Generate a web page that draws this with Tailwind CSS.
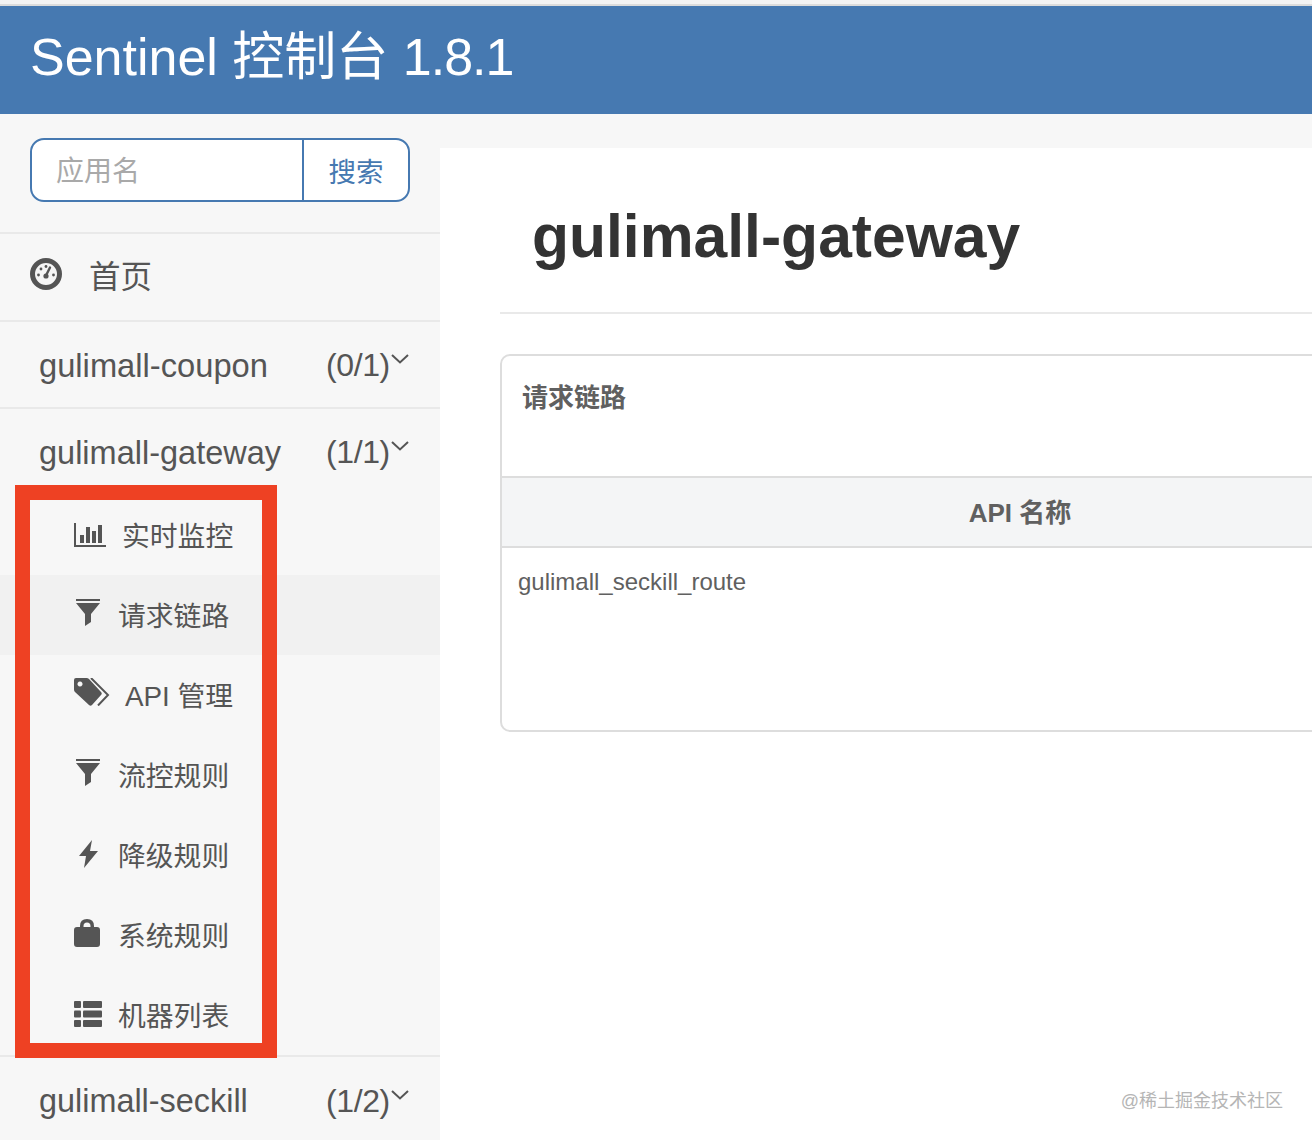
<!DOCTYPE html>
<html lang="zh-CN">

<head>
    <meta charset="UTF-8">
    <title>Sentinel 控制台</title>
    <script src="https://cdn.jsdelivr.net/npm/@tailwindcss/browser@4"></script>
</head>

<body class="relative h-[1140px] w-[1312px] overflow-hidden bg-white text-[#555] font-['Liberation_Sans','Noto_Sans_CJK_SC',sans-serif]">
    <!-- Navbar -->
    <div class="h-[6px] border-b-2 border-[#dcdcdc] bg-[#f3f3f3]"></div>
    <header class="flex h-[108px] items-center bg-[#4679b1] pl-[30px] pb-[6px] text-[52px] leading-none text-white">
        <span class="whitespace-pre">Sentinel 控制台 <span class="tracking-[-1px]">1.8.1</span></span>
    </header>

    <div class="flex h-[1026px]">
        <!-- Sidebar -->
        <aside class="w-[440px] shrink-0 bg-[#f7f7f7]">
            <div class="h-[120px] border-b-2 border-[#e9e9e9] px-[30px] pt-[24px]">
                <div class="flex h-[64px] w-[380px] overflow-hidden rounded-[14px] border-2 border-[#4679b1] bg-white">
                    <div class="flex w-[270px] items-center pl-[24px] pt-[3px] text-[28px] text-[#a9a9a9]">应用名</div>
                    <div class="flex flex-1 items-center justify-center border-l-2 border-[#4679b1] pt-[6px] text-[27.500px] text-[#4679b1]">搜索</div>
                </div>
            </div>

            <a class="flex h-[88px] items-center border-b-2 border-[#e9e9e9] pl-[30px]">
                <svg class="mb-[7px] h-[32px] w-[32px]" viewBox="0 0 32 32">
                    <circle cx="16" cy="16" r="13.5" fill="#f6f6f6" stroke="#555" stroke-width="5" />
                    <path d="M16 17.5 L20 9.5" stroke="#555" stroke-width="2.4" stroke-linecap="round" />
                    <circle cx="16" cy="18" r="2.6" fill="#555" />
                    <circle cx="8.5" cy="17" r="1.4" fill="#555" />
                    <circle cx="23.5" cy="17" r="1.4" fill="#555" />
                    <circle cx="11" cy="11" r="1.4" fill="#555" />
                    <circle cx="16" cy="8.5" r="1.4" fill="#555" />
                </svg>
                <span class="ml-[27px] pt-[2px] text-[31.500px]">首页</span>
            </a>

            <a class="flex h-[87px] items-center justify-between border-b-2 border-[#e9e9e9] pl-[39px] pr-[30px] text-[32.700px]">
                <span class="mt-[2px]">gulimall-coupon</span>
                <span class="flex w-[84px] items-start text-[32px] tracking-[-0.4px]">(0/1)
                    <svg class="ml-[1px] mt-[13px] h-[10px] w-[18px]" viewBox="0 0 18 10" fill="none" stroke="#555" stroke-width="2"><path d="M1 1 L9 8.500 L17 1" /></svg>
                </span>
            </a>

            <a class="flex h-[86px] items-center justify-between pl-[39px] pr-[30px] text-[32.500px]">
                <span class="mt-[2px]">gulimall-gateway</span>
                <span class="flex w-[84px] items-start text-[32px] tracking-[-0.4px]">(1/1)
                    <svg class="ml-[1px] mt-[13px] h-[10px] w-[18px]" viewBox="0 0 18 10" fill="none" stroke="#555" stroke-width="2"><path d="M1 1 L9 8.500 L17 1" /></svg>
                </span>
            </a>

            <!-- Submenu -->
            <ul class="text-[27.800px]">
                <li class="flex h-[80px] items-center pl-[74px]">
                    <svg class="h-[24px] w-[32px]" viewBox="0 0 32 24" fill="#555">
                        <path d="M0 0h2v22h30v2H0z" />
                        <path d="M6 12h4v8H6zM12 4h4v16h-4zM18 8h4v12h-4zM24 2h4v18h-4z" />
                    </svg>
                    <span class="ml-[16px] pt-[3px]">实时监控</span>
                </li>
                <li class="flex h-[80px] items-center bg-[#f1f1f1] pl-[76px]">
                    <svg class="mb-[4px] h-[28px] w-[24px]" viewBox="0 0 24 28" fill="#555">
                        <path d="M0 0h24v2H0zM0 4h24L15 15v8L9 27V15z" />
                    </svg>
                    <span class="ml-[18px] pt-[3px]">请求链路</span>
                </li>
                <li class="flex h-[80px] items-center pl-[74px]">
                    <svg class="mb-[6px] h-[28px] w-[36px]" viewBox="0 0 36 28" fill="#555">
                        <path fill-rule="evenodd" d="M2 0h10.500q1.500 0 2.500 1l12 13q1.500 1.500 0 3L18 27q-1.500 1.500-3 0L1 14q-1-1-1-2.500V2q0-2 2-2zM6 3.500a2.500 2.500 0 1 0 .01 0z" />
                        <path d="M17 0 L34 17 L24 27.500" fill="none" stroke="#555" stroke-width="2" />
                    </svg>
                    <span class="ml-[15px] pt-[3px]">API 管理</span>
                </li>
                <li class="flex h-[80px] items-center pl-[76px]">
                    <svg class="mb-[4px] h-[28px] w-[24px]" viewBox="0 0 24 28" fill="#555">
                        <path d="M0 0h24v2H0zM0 4h24L15 15v8L9 27V15z" />
                    </svg>
                    <span class="ml-[18px] pt-[3px]">流控规则</span>
                </li>
                <li class="flex h-[80px] items-center pl-[79px]">
                    <svg class="mb-[3px] h-[28px] w-[19px]" viewBox="0 0 19 28" fill="#555">
                        <path d="M13 0 L0 16h7L5 28 19 11h-8z" />
                    </svg>
                    <span class="ml-[20px] pt-[3px]">降级规则</span>
                </li>
                <li class="flex h-[80px] items-center pl-[74px]">
                    <svg class="mb-[4px] h-[28px] w-[26px]" viewBox="0 0 26 28" fill="#555">
                        <path fill-rule="evenodd" d="M6 8V7q0-7 7-7t7 7v1h3q3 0 3 3V25q0 3-3 3H3q-3 0-3-3V11q0-3 3-3zM9.500 8h7V7q0-3.500-3.500-3.500T9.500 7z" />
                    </svg>
                    <span class="ml-[18px] pt-[3px]">系统规则</span>
                </li>
                <li class="flex h-[80px] items-center pl-[74px]">
                    <svg class="mb-[2px] h-[26px] w-[28px]" viewBox="0 0 28 26" fill="#555">
                        <rect width="7" height="7" rx="1" />
                        <rect x="9" width="19" height="7" rx="1" />
                        <rect y="9.500" width="7" height="7" rx="1" />
                        <rect x="9" y="9.500" width="19" height="7" rx="1" />
                        <rect y="19" width="7" height="7" rx="1" />
                        <rect x="9" y="19" width="19" height="7" rx="1" />
                    </svg>
                    <span class="ml-[16px] pt-[3px]">机器列表</span>
                </li>
            </ul>

            <a class="flex h-[90px] items-center justify-between border-t-2 border-[#e9e9e9] pl-[39px] pr-[30px] text-[32.400px]">
                <span>gulimall-seckill</span>
                <span class="flex w-[84px] items-start text-[32px] tracking-[-0.4px]">(1/2)
                    <svg class="ml-[1px] mt-[13px] h-[10px] w-[18px]" viewBox="0 0 18 10" fill="none" stroke="#555" stroke-width="2"><path d="M1 1 L9 8.500 L17 1" /></svg>
                </span>
            </a>
        </aside>

        <!-- Content -->
        <main class="flex-1 overflow-hidden bg-[#f7f7f7] pt-[34px]">
            <div class="h-full bg-white pl-[60px]">
                <div class="h-[166px] w-[1000px] border-b-2 border-[#e9e9e9] pl-[32px] pt-[52px]">
                    <h1 class="text-[60.600px] leading-[72px] font-bold text-[#333]">gulimall-gateway</h1>
                </div>
                <section class="mt-[40px] h-[378px] w-[1040px] rounded-[10px] border-2 border-[#ddd] text-[#606060]">
                    <div class="h-[120px] pl-[20px] pt-[24px] text-[26px] leading-[36px] font-bold">请求链路</div>
                    <div class="flex h-[72px] items-center justify-center border-y-2 border-[#ddd] bg-[#f4f5f6] pt-[2px] text-[26px] font-bold">API 名称</div>
                    <div class="pl-[16px] pt-[18px] text-[24px] leading-[32px]">gulimall_seckill_route</div>
                </section>
            </div>
        </main>
    </div>

    <!-- Red annotation -->
    <div class="absolute left-[15px] top-[485px] h-[573px] w-[262px] border-[15px] border-[#ee4123]"></div>
    <!-- Watermark -->
    <div class="absolute right-[29px] top-[1089px] text-[18px] leading-[24px] text-[#b5b5b5]">@稀土掘金技术社区</div>
</body>

</html>
